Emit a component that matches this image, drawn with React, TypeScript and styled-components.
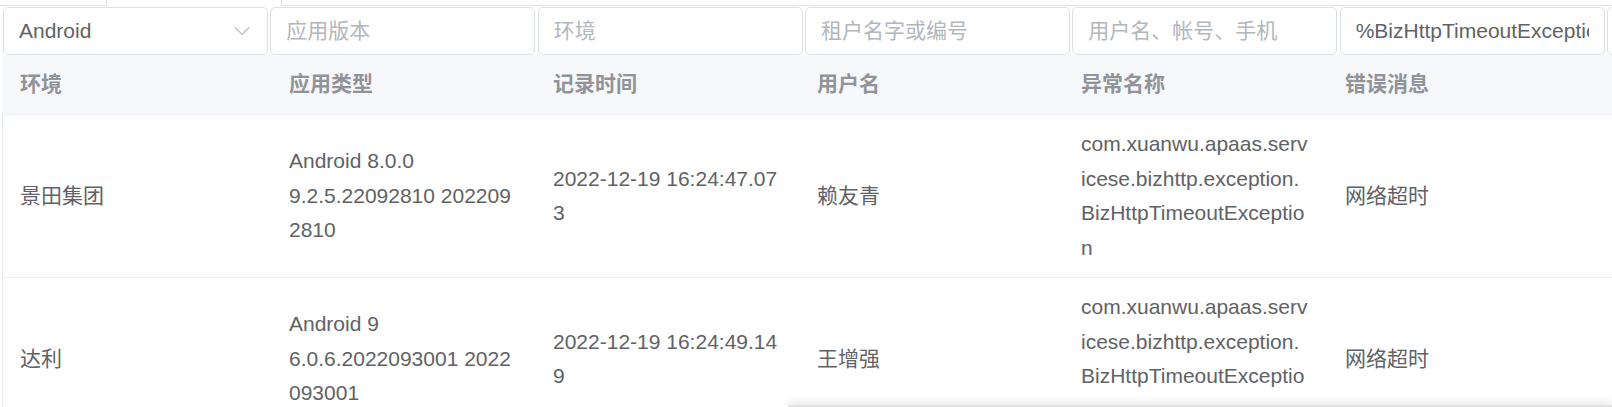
import React from "react";
import styled, { createGlobalStyle } from "styled-components";

const GlobalStyle = createGlobalStyle`
  html, body { margin: 0; padding: 0; background: #ffffff; }
  body { font-family: "Liberation Sans", Arial, "Noto Sans CJK SC", sans-serif; }
  * { box-sizing: border-box; }
`;

const FONT = `"Liberation Sans", Arial, "Noto Sans CJK SC", sans-serif`;

const Page = styled.div`
  width: 1612px;
  height: 407px;
  overflow: hidden;
  position: relative;
  background: #ffffff;
`;

const TabStrip = styled.div`
  display: flex;
  height: 6px;
`;

const TabStub = styled.div<{ $w?: number; $active?: boolean; $rest?: boolean }>`
  height: 6px;
  ${(p) => (p.$rest ? "flex: 1;" : `width: ${p.$w}px; flex-shrink: 0;`)}
  border-bottom: ${(p) => (p.$active ? "none" : "1px solid #dfe2e8")};
  ${(p) => (p.$w === 107 ? "border-right: 1px solid #dfe2e8;" : "")}
  ${(p) => (p.$rest ? "border-left: 1px solid #dfe2e8;" : "")}
`;

const FilterRow = styled.div`
  display: flex;
  gap: 2.33px;
  padding: 1px 0 0 3px;
  overflow: hidden;
`;

const FieldBox = styled.div`
  position: relative;
  flex: 0 0 265px;
  height: 48px;
  border: 1px solid #dcdfe6;
  border-radius: 5px;
  background: #fff;
  display: flex;
  align-items: center;
  padding: 0 15px;
`;

const FieldInput = styled.input`
  border: none;
  outline: none;
  background: transparent;
  width: 100%;
  padding: 0;
  font-family: ${FONT};
  font-size: 21px;
  color: #606266;
  &::placeholder {
    color: #b3b6bc;
  }
`;

const SelectText = styled.span`
  flex: 1;
  font-family: ${FONT};
  font-size: 21px;
  color: #606266;
`;

const Chevron = styled.svg`
  flex-shrink: 0;
  margin-right: 2px;
`;

const Table = styled.div`
  display: flex;
  flex-direction: column;
`;

const COLS = "269px 264px 264px 264px 264px 264px 1fr";

const HeaderRow = styled.div`
  display: grid;
  grid-template-columns: ${COLS};
  margin-left: 2px;
  padding-left: 1px;
  background: #f7f8fa;
  border-bottom: 1px solid #ebeef5;
  height: 60px;
  align-items: center;
`;

const HeaderCell = styled.div`
  padding: 0 17px;
  font-family: ${FONT};
  font-size: 21px;
  font-weight: bold;
  color: #909399;
  line-height: 34.5px;
`;

const Body = styled.div`
  margin-left: 2px;
  border-left: 1px solid #e4e7ed;
`;

const Row = styled.div`
  display: grid;
  grid-template-columns: ${COLS};
  align-items: center;
  border-bottom: 1px solid #ebeef5;
`;

const Cell = styled.div`
  padding: 12px 17px;
  font-family: ${FONT};
  font-size: 21px;
  line-height: 34.5px;
  color: #606266;
  word-break: break-all;
`;

const Line = styled.div``;

const BottomShade = styled.div`
  position: absolute;
  left: 788px;
  right: 0;
  top: 405px;
  height: 10px;
  background: #e2e2e2;
  box-shadow: 0 -3px 10px rgba(0, 0, 0, 0.09);
`;

type Rec = {
  env: string;
  app: string[];
  time: string;
  user: string;
  ex: string;
  msg: string;
};

const rows: Rec[] = [
  {
    env: "景田集团",
    app: ["Android 8.0.0", "9.2.5.22092810 2022092810"],
    time: "2022-12-19 16:24:47.073",
    user: "赖友青",
    ex: "com.xuanwu.apaas.servicese.bizhttp.exception.BizHttpTimeoutException",
    msg: "网络超时",
  },
  {
    env: "达利",
    app: ["Android 9", "6.0.6.2022093001 2022093001"],
    time: "2022-12-19 16:24:49.149",
    user: "王增强",
    ex: "com.xuanwu.apaas.servicese.bizhttp.exception.BizHttpTimeoutException",
    msg: "网络超时",
  },
];

const headers = ["环境", "应用类型", "记录时间", "用户名", "异常名称", "错误消息", ""];

export default function App() {
  return (
    <Page>
      <GlobalStyle />
      <TabStrip>
        <TabStub $w={107} />
        <TabStub $w={174} $active />
        <TabStub $rest />
      </TabStrip>
      <FilterRow>
        <FieldBox>
          <SelectText>Android</SelectText>
          <Chevron width="16" height="10" viewBox="0 0 16 10">
            <polyline points="1,1.5 8,8.5 15,1.5" fill="none" stroke="#b8bbc2" strokeWidth="1.2" />
          </Chevron>
        </FieldBox>
        <FieldBox>
          <FieldInput placeholder="应用版本" readOnly />
        </FieldBox>
        <FieldBox>
          <FieldInput placeholder="环境" readOnly />
        </FieldBox>
        <FieldBox>
          <FieldInput placeholder="租户名字或编号" readOnly />
        </FieldBox>
        <FieldBox>
          <FieldInput placeholder="用户名、帐号、手机" readOnly />
        </FieldBox>
        <FieldBox>
          <FieldInput value="%BizHttpTimeoutException" readOnly />
        </FieldBox>
        <FieldBox>
          <FieldInput readOnly />
        </FieldBox>
      </FilterRow>
      <Table>
        <HeaderRow>
          {headers.map((h, i) => (
            <HeaderCell key={i}>{h}</HeaderCell>
          ))}
        </HeaderRow>
        <Body>
          {rows.map((r, i) => (
            <Row key={i}>
              <Cell>{r.env}</Cell>
              <Cell>
                {r.app.map((l, j) => (
                  <Line key={j}>{l}</Line>
                ))}
              </Cell>
              <Cell>{r.time}</Cell>
              <Cell>{r.user}</Cell>
              <Cell>{r.ex}</Cell>
              <Cell>{r.msg}</Cell>
              <Cell />
            </Row>
          ))}
        </Body>
      </Table>
      <BottomShade />
    </Page>
  );
}
